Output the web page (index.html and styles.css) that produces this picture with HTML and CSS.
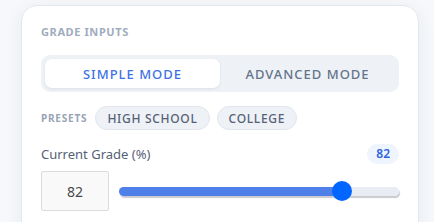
FILE: index.html
```html
<!DOCTYPE html>
<html lang="en">
  <head>
    <meta charset="UTF-8" />
    <meta name="viewport" content="width=device-width, initial-scale=1.0" />
    <title>Grade Inputs</title>
    <link rel="stylesheet" href="styles.css">
  </head>
  <body>
    <div class="card">
      <div class="card-title">Grade Inputs</div>

      <div class="mode-switch">
        <button class="mode-btn active">Simple Mode</button>
        <button class="mode-btn">Advanced Mode</button>
      </div>

      <div class="presets">
        <span class="presets-label">Presets</span>
        <button class="preset">High School</button>
        <button class="preset">College</button>
      </div>

      <div class="field-head">
        <label for="current-grade">Current Grade (%)</label>
        <span class="value-badge" id="grade-badge">82</span>
      </div>
      <div class="field-row">
        <input class="num-input" id="current-grade" type="text" value="82" />
        <input class="slider" id="grade-slider" type="range" min="0" max="100" value="82" />
      </div>
    </div>

    <script>
      const slider = document.getElementById('grade-slider');
      const badge = document.getElementById('grade-badge');
      const input = document.getElementById('current-grade');

      function paint() {
        slider.style.setProperty('--fill', slider.value + '%');
      }

      slider.addEventListener('input', function () {
        badge.textContent = slider.value;
        input.value = slider.value;
        paint();
      });
      paint();
    </script>
  </body>
</html>
```

FILE: styles.css
```css
* {
  margin: 0;
  padding: 0;
  box-sizing: border-box;
  font-family: 'Noto Sans', 'Open Sans', sans-serif;
}

body {
  background-color: #f6f8fb;
  padding: 5px 0 0 21px;
}

.card {
  width: 398px;
  background-color: white;
  border: 1px solid #e3e8f0;
  border-radius: 16px;
  box-shadow: 0 4px 18px rgba(30, 50, 90, 0.07);
  padding: 18px 19px 30px;
}

.card-title {
  font-size: 11px;
  font-weight: 700;
  letter-spacing: 0.6px;
  text-transform: uppercase;
  color: #a0acbe;
  line-height: 16px;
  margin-bottom: 15px;
}

.mode-switch {
  display: flex;
  background-color: #eef2f7;
  border-radius: 9px;
  padding: 4px;
}

.mode-btn {
  flex: 1;
  height: 29px;
  border: none;
  border-radius: 7px;
  background: none;
  font-size: 13px;
  font-weight: 500;
  letter-spacing: 1px;
  text-transform: uppercase;
  color: #64748b;
  cursor: pointer;
}

.mode-btn.active {
  background-color: white;
  color: #3d72e6;
  box-shadow: 0 1px 3px rgba(0, 0, 0, 0.08);
}

.presets {
  display: flex;
  align-items: center;
  gap: 7px;
  margin-top: 14px;
}

.presets-label {
  font-size: 10px;
  font-weight: 700;
  letter-spacing: 0.8px;
  text-transform: uppercase;
  color: #97a3b6;
  margin-right: 1px;
}

.preset {
  height: 24px;
  padding: 0 11px;
  border: 1px solid #e1e6ee;
  border-radius: 12px;
  background-color: #eef2f7;
  font-size: 12px;
  font-weight: 500;
  letter-spacing: 0.7px;
  text-transform: uppercase;
  color: #566176;
  cursor: pointer;
}

.field-head {
  display: flex;
  justify-content: space-between;
  align-items: center;
  margin-top: 14px;
}

.field-head label {
  font-size: 13px;
  color: #566176;
}

.value-badge {
  height: 20px;
  line-height: 20px;
  padding: 0 9px;
  border-radius: 10px;
  background-color: #eef5ff;
  font-size: 12px;
  font-weight: 600;
  color: #2f63e0;
}

.field-row {
  display: flex;
  align-items: center;
  gap: 10px;
  margin-top: 7px;
}

.num-input {
  width: 68px;
  height: 40px;
  border: 1px solid #dcdcdc;
  border-radius: 2px;
  background-color: #f9f9f9;
  text-align: center;
  font-size: 14px;
  color: #4a4a4a;
}

.slider {
  -webkit-appearance: none;
  appearance: none;
  flex: 1;
  height: 20px;
  background: none;
}

.slider::-webkit-slider-runnable-track {
  height: 9px;
  border-radius: 5px;
  background: linear-gradient(to right, #4f80ea var(--fill), #e8edf4 var(--fill));
  box-shadow: 1px 2px 1px #c9cbcf;
}

.slider::-webkit-slider-thumb {
  -webkit-appearance: none;
  width: 20px;
  height: 20px;
  margin-top: -5.5px;
  border-radius: 50%;
  background-color: #0066ff;
  border: none;
}
```
